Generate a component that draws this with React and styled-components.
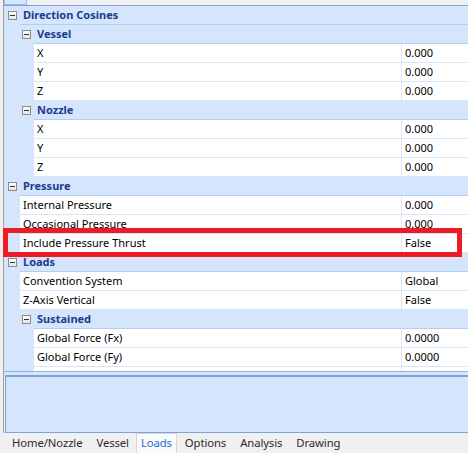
import React from "react";
import styled, { createGlobalStyle } from "styled-components";

const HEADER_BG = "#d5e5fb";
const HEADER_LINE = "#b2cff3";
const ITEM_LINE = "#d5e5fb";
const NAVY = "#1d3b8e";

const rows = [
  { kind: "cat", label: "Direction Cosines", level: 0 },
  { kind: "cat", label: "Vessel", level: 1 },
  { kind: "item", label: "X", value: "0.000", level: 1 },
  { kind: "item", label: "Y", value: "0.000", level: 1 },
  { kind: "item", label: "Z", value: "0.000", level: 1 },
  { kind: "cat", label: "Nozzle", level: 1 },
  { kind: "item", label: "X", value: "0.000", level: 1 },
  { kind: "item", label: "Y", value: "0.000", level: 1 },
  { kind: "item", label: "Z", value: "0.000", level: 1 },
  { kind: "cat", label: "Pressure", level: 0 },
  { kind: "item", label: "Internal Pressure", value: "0.000", level: 0 },
  { kind: "item", label: "Occasional Pressure", value: "0.000", level: 0 },
  { kind: "item", label: "Include Pressure Thrust", value: "False", level: 0 },
  { kind: "cat", label: "Loads", level: 0 },
  { kind: "item", label: "Convention System", value: "Global", level: 0 },
  { kind: "item", label: "Z-Axis Vertical", value: "False", level: 0 },
  { kind: "cat", label: "Sustained", level: 1 },
  { kind: "item", label: "Global Force (Fx)", value: "0.0000", level: 1 },
  { kind: "item", label: "Global Force (Fy)", value: "0.0000", level: 1 },
  { kind: "item", label: "Global Force (Fz)", value: "0.0000", level: 1 },
];

const tabs = ["Home/Nozzle", "Vessel", "Loads", "Options", "Analysis", "Drawing"];

export default function App() {
  return (
    <Window>
      <GlobalStyle />
      <Main>
        <TopStrip>
          <StubTab />
        </TopStrip>
        <Grid>
          {rows.map((r, i) =>
            r.kind === "cat" ? (
              <Row key={i}>
                <Gutter level={r.level}>
                  <Toggle level={r.level} />
                </Gutter>
                <CategoryCell>{r.label}</CategoryCell>
              </Row>
            ) : (
              <Row key={i}>
                <Gutter level={r.level} />
                <NameCell>{r.label}</NameCell>
                <ValueCell>{r.value}</ValueCell>
              </Row>
            )
          )}
        </Grid>
        <Splitter />
        <HelpPanel />
      </Main>
      <TabStrip>
        {tabs.map((t) => (
          <Tab key={t} active={t === "Loads"}>
            {t}
          </Tab>
        ))}
      </TabStrip>
      <Highlight />
    </Window>
  );
}

const GlobalStyle = createGlobalStyle`
  * {
    margin: 0;
    padding: 0;
    box-sizing: border-box;
  }
  body {
    background: #f0f0f0;
    font-family: "Noto Sans", "Open Sans", sans-serif;
    font-size: 11px;
    color: #000;
  }
`;

const Window = styled.div`
  position: relative;
  width: 468px;
  height: 453px;
  display: flex;
  flex-direction: column;
  background: #f0f0f0;
  overflow: hidden;
`;

const Main = styled.div`
  display: flex;
  flex-direction: column;
  margin-left: 3px;
  border-left: 1px solid #a0a0a0;
  height: 433px;
`;

const TopStrip = styled.div`
  height: 5px;
  display: flex;
`;

const StubTab = styled.div`
  width: 23px;
  height: 5px;
  background: ${HEADER_BG};
  border: 1px solid #9bbbe8;
  border-top: none;
`;

const Grid = styled.div`
  height: 367px;
  overflow: hidden;
  background: #fff;
  border-top: 1px solid #7fa3d8;
  border-bottom: 1px solid #8fb3e6;
`;

const Row = styled.div`
  display: flex;
  height: 19px;
  background: ${HEADER_BG};
`;

// tree indent column, one step of 14px per level
const Gutter = styled.div`
  position: relative;
  flex: none;
  width: ${({ level }) => 16 + level * 14}px;
  height: 19px;
  background: ${HEADER_BG};
`;

const Toggle = styled.span`
  position: absolute;
  top: 5px;
  left: ${({ level }) => 4 + level * 14}px;
  width: 9px;
  height: 9px;
  border: 1px solid #8c8c8c;
  background: linear-gradient(#ffffff, #e6e6e6);
  &::after {
    content: "";
    position: absolute;
    left: 1px;
    top: 3px;
    width: 5px;
    height: 1px;
    background: #333;
  }
`;

const CategoryCell = styled.div`
  flex: 1;
  height: 19px;
  padding-left: 3px;
  line-height: 18px;
  font-weight: 700;
  font-size: 11px;
  color: ${NAVY};
  border-bottom: 1px solid ${HEADER_LINE};
  white-space: nowrap;
`;

const NameCell = styled.div`
  flex: 1;
  height: 19px;
  padding-left: 3px;
  line-height: 18px;
  background: #fff;
  border-bottom: 1px solid ${ITEM_LINE};
  white-space: nowrap;
`;

const ValueCell = styled.div`
  flex: none;
  width: 67px;
  height: 19px;
  padding-left: 3px;
  line-height: 18px;
  background: #fff;
  border-left: 1px solid ${ITEM_LINE};
  border-bottom: 1px solid ${ITEM_LINE};
  white-space: nowrap;
`;

const Splitter = styled.div`
  height: 3px;
  background: ${HEADER_BG};
`;

const HelpPanel = styled.div`
  flex: 1;
  margin-left: 1px;
  background: ${HEADER_BG};
  border-left: 1px solid #7fa3d8;
  border-top: 2px solid #7fa3d8;
  border-bottom: 1px solid #7fa3d8;
`;

const TabStrip = styled.div`
  flex: 1;
  display: flex;
  align-items: flex-end;
  padding-left: 5px;
  background: #f0f0f0;
`;

const Tab = styled.div`
  height: 20px;
  padding: 0 ${({ active }) => (active ? "4px" : "6px")};
  margin-right: ${({ active }) => (active ? "1px" : "0")};
  line-height: 18px;
  font-size: 11.3px;
  letter-spacing: -0.1px;
  color: ${({ active }) => (active ? "#1f6ec8" : "#2b2b2b")};
  background: ${({ active }) => (active ? "#fafafa" : "transparent")};
  border: 1px solid ${({ active }) => (active ? "#d6d6d6" : "transparent")};
  border-bottom: none;
  white-space: nowrap;
`;

// red annotation box drawn over the grid
const Highlight = styled.div`
  position: absolute;
  left: 3px;
  top: 228px;
  width: 459px;
  height: 29px;
  border: 5px solid #ed1c24;
  pointer-events: none;
`;
